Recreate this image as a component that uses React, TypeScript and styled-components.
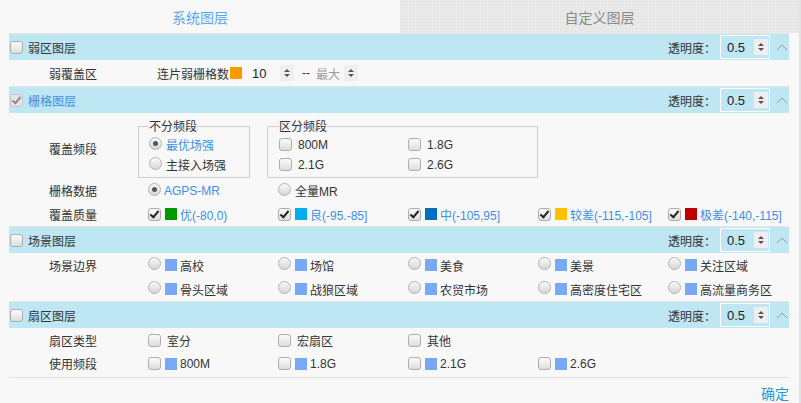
import React from 'react';
import styled, { createGlobalStyle, css } from 'styled-components';

const GlobalStyle = createGlobalStyle`
  html, body {
    margin: 0;
    padding: 0;
    background: #f8f8f8;
  }
  body {
    font-family: 'Liberation Sans', 'Noto Sans CJK SC', sans-serif;
    font-size: 12px;
    color: #333;
  }
`;

const BLUE = '#3f8fe2';

const Page = styled.div`
  width: 801px;
  height: 403px;
  overflow: hidden;
  border-right: 2px solid #e2e2e2;
  box-sizing: border-box;
`;

const Tabs = styled.div`
  display: grid;
  grid-template-columns: 400px 1fr;
  height: 33px;
`;

const Tab = styled.div<{ $active?: boolean }>`
  display: flex;
  align-items: center;
  justify-content: center;
  font-size: 14px;
  color: ${p => (p.$active ? '#58a8ee' : '#8a8a8a')};
  background: ${p => (p.$active ? 'transparent' : '#e9e9e9')};
  ${p =>
    !p.$active &&
    css`
      background-image: radial-gradient(#dedede 0.6px, transparent 0.8px);
      background-size: 3px 3px;
    `}
`;

const Content = styled.div`
  margin: 0 10px 0 9px;
`;

const SectionHeader = styled.div`
  display: flex;
  align-items: center;
  height: 26px;
  background: #bee6f3;
  border-top: 1px solid #e4e4e4;
  padding-left: 1px;
`;

const HeaderTitle = styled.span<{ $blue?: boolean }>`
  margin-left: 5px;
  font-size: 12px;
  color: ${p => (p.$blue ? BLUE : '#333')};
`;

const HeaderRight = styled.div`
  margin-left: auto;
  display: flex;
  align-items: center;
`;

const OpacityLabel = styled.span`
  color: #333;
  margin-right: 4px;
`;

const OpacityBox = styled.div`
  display: flex;
  align-items: center;
  width: 42px;
  height: 22px;
  border: 1px solid #fff;
  background: transparent;
  padding-left: 6px;
  font-size: 13px;
  color: #222;
`;

const Spinner = styled.span`
  display: inline-flex;
  flex-direction: column;
  align-items: center;
  justify-content: center;
  gap: 2px;
  width: 14px;
  height: 16px;
  background: #efefef;
  margin-left: auto;
  margin-right: 1px;

  &::before,
  &::after {
    content: '';
    width: 0;
    height: 0;
    border-left: 3px solid transparent;
    border-right: 3px solid transparent;
  }
  &::before {
    border-bottom: 3px solid #555;
  }
  &::after {
    border-top: 3px solid #555;
  }
`;

const Chevron = styled.svg`
  width: 12px;
  height: 8px;
  margin: 0 1px 0 6px;
`;

const Body = styled.div<{ $pt?: number; $pb?: number }>`
  padding-top: ${p => p.$pt ?? 0}px;
  padding-bottom: ${p => p.$pb ?? 0}px;
`;

const Row = styled.div<{ $h?: number }>`
  display: flex;
  align-items: center;
  height: ${p => p.$h ?? 23}px;
`;

const Label = styled.div`
  width: 99px;
  padding-left: 40px;
  flex-shrink: 0;
`;

const Cell = styled.div<{ $w?: number }>`
  display: flex;
  align-items: center;
  width: ${p => p.$w ?? 130}px;
  flex-shrink: 0;
  white-space: nowrap;
`;

const Box = styled.span<{ $checked?: boolean; $muted?: boolean }>`
  position: relative;
  display: inline-block;
  width: 11px;
  height: 11px;
  border: 1px solid #aeaeae;
  border-radius: 3px;
  background: linear-gradient(#fbfbfb, #dddddd);
  flex-shrink: 0;
  ${p =>
    p.$muted &&
    css`
      background: #e4e4e4;
      border-color: #c4c4c4;
    `}
  ${p =>
    p.$checked &&
    css`
      &::after {
        content: '';
        position: absolute;
        left: 3px;
        top: 0px;
        width: 3px;
        height: 7px;
        border: solid ${p.$muted ? '#8c8c8c' : '#222'};
        border-width: 0 2px 2px 0;
        transform: rotate(40deg);
      }
    `}
`;

const Radio = styled.span<{ $checked?: boolean }>`
  position: relative;
  display: inline-block;
  width: 11px;
  height: 11px;
  border: 1px solid #b3b3b3;
  border-radius: 50%;
  background: linear-gradient(#fafafa, #d6d6d6);
  flex-shrink: 0;
  margin-top: -3px;
  ${p =>
    p.$checked &&
    css`
      &::after {
        content: '';
        position: absolute;
        left: 3px;
        top: 3px;
        width: 5px;
        height: 5px;
        border-radius: 50%;
        background: #555;
      }
    `}
`;

const Swatch = styled.span<{ $color: string; $ml?: number }>`
  display: inline-block;
  width: 12px;
  height: 12px;
  background: ${p => p.$color};
  margin-left: ${p => p.$ml ?? 4}px;
  flex-shrink: 0;
`;

const Text = styled.span<{ $blue?: boolean; $gap?: number; $muted?: boolean }>`
  margin-left: ${p => p.$gap ?? 5}px;
  color: ${p => (p.$blue ? BLUE : p.$muted ? '#9a9a9a' : '#333')};
  font-size: 12px;
`;

const NumberField = styled.div<{ $w: number; $ml: number; $placeholder?: boolean }>`
  display: flex;
  align-items: center;
  width: ${p => p.$w}px;
  margin-left: ${p => p.$ml}px;
  font-size: ${p => (p.$placeholder ? 12 : 13)}px;
  color: ${p => (p.$placeholder ? '#9a9a9a' : '#222')};
`;

const Fieldsets = styled.div`
  display: flex;
  gap: 17px;
  margin-left: -10px;
`;

const Group = styled.fieldset<{ $w: number; $pl: number }>`
  margin: 0;
  width: ${p => p.$w}px;
  box-sizing: border-box;
  border: 1px solid #cfcfcf;
  padding: 0 0 2px ${p => p.$pl}px;
`;

const Legend = styled.legend`
  padding: 0;
  line-height: 16px;
  font-size: 12px;
  color: #333;
`;

const GroupGrid = styled.div<{ $cols: number }>`
  display: grid;
  grid-template-columns: repeat(${p => p.$cols}, 129px);
`;

const GroupItem = styled.div`
  display: flex;
  align-items: center;
  height: 20px;
  white-space: nowrap;
`;

const Footer = styled.div`
  display: flex;
  justify-content: flex-end;
  align-items: center;
  height: 29px;
  border-top: 1px solid #dedede;
`;

const Confirm = styled.span`
  font-size: 14px;
  color: #2598d6;
  cursor: pointer;
`;

const Header: React.FC<{ title: string; checked?: boolean; blue?: boolean }> = ({ title, checked, blue }) => (
  <SectionHeader>
    <Box $checked={checked} $muted={checked} />
    <HeaderTitle $blue={blue}>{title}</HeaderTitle>
    <HeaderRight>
      <OpacityLabel>透明度：</OpacityLabel>
      <OpacityBox>
        0.5
        <Spinner />
      </OpacityBox>
      <Chevron viewBox="0 0 12 8">
        <polyline points="1,7 6,2 11,7" fill="none" stroke="#9a9a9a" strokeWidth="1" />
      </Chevron>
    </HeaderRight>
  </SectionHeader>
);

const quality = [
  { color: '#009a00', text: '优(-80,0)' },
  { color: '#00aeef', text: '良(-95.-85]' },
  { color: '#0070c0', text: '中(-105,95]' },
  { color: '#ffc000', text: '较差(-115,-105]' },
  { color: '#c00000', text: '极差(-140,-115]' },
];

const SCENE = '#78a9f6';
const sceneRows = [
  ['高校', '场馆', '美食', '美景', '关注区域'],
  ['骨头区域', '战狼区域', '农贸市场', '高密度住宅区', '高流量商务区'],
];

export default function App() {
  return (
    <Page>
      <GlobalStyle />
      <Tabs>
        <Tab $active>系统图层</Tab>
        <Tab>自定义图层</Tab>
      </Tabs>
      <Content>
        <Header title="弱区图层" />
        <Body>
          <Row $h={26}>
            <Label>弱覆盖区</Label>
            <Text $gap={9}>连片弱栅格数</Text>
            <Swatch $color="#ff9900" $ml={1} />
            <NumberField $w={43} $ml={10}>
              10
              <Spinner />
            </NumberField>
            <Text $gap={7}>--</Text>
            <NumberField $w={43} $ml={6} $placeholder>
              最大
              <Spinner />
            </NumberField>
          </Row>
        </Body>

        <Header title="栅格图层" checked blue />
        <Body $pt={4}>
          <Row $h={62}>
            <Label>覆盖频段</Label>
            <Fieldsets>
              <Group $w={112} $pl={10}>
                <Legend>不分频段</Legend>
                <GroupItem>
                  <Radio $checked />
                  <Text $blue $gap={4}>最优场强</Text>
                </GroupItem>
                <GroupItem>
                  <Radio />
                  <Text $gap={4}>主接入场强</Text>
                </GroupItem>
              </Group>
              <Group $w={252} $pl={11}>
                <Legend>区分频段</Legend>
                <GroupGrid $cols={2}>
                  {['800M', '1.8G', '2.1G', '2.6G'].map(t => (
                    <GroupItem key={t}>
                      <Box />
                      <Text $gap={6}>{t}</Text>
                    </GroupItem>
                  ))}
                </GroupGrid>
              </Group>
            </Fieldsets>
          </Row>
          <Row>
            <Label>栅格数据</Label>
            <Cell>
              <Radio $checked />
              <Text $blue $gap={3}>AGPS-MR</Text>
            </Cell>
            <Cell>
              <Radio />
              <Text $gap={4}>全量MR</Text>
            </Cell>
          </Row>
          <Row $h={24}>
            <Label>覆盖质量</Label>
            {quality.map(q => (
              <Cell key={q.text}>
                <Box $checked />
                <Swatch $color={q.color} />
                <Text $blue $gap={3}>{q.text}</Text>
              </Cell>
            ))}
          </Row>
        </Body>

        <Header title="场景图层" />
        <Body>
          {sceneRows.map((r, i) => (
            <Row key={i} $h={24}>
              <Label>{i === 0 ? '场景边界' : ''}</Label>
              {r.map(t => (
                <Cell key={t}>
                  <Radio />
                  <Swatch $color={SCENE} />
                  <Text $gap={3}>{t}</Text>
                </Cell>
              ))}
            </Row>
          ))}
        </Body>

        <Header title="扇区图层" />
        <Body $pt={1} $pb={2}>
          <Row>
            <Label>扇区类型</Label>
            {['室分', '宏扇区', '其他'].map(t => (
              <Cell key={t}>
                <Box />
                <Text $gap={6}>{t}</Text>
              </Cell>
            ))}
          </Row>
          <Row>
            <Label>使用频段</Label>
            {['800M', '1.8G', '2.1G', '2.6G'].map(t => (
              <Cell key={t}>
                <Box />
                <Swatch $color={SCENE} />
                <Text $gap={3}>{t}</Text>
              </Cell>
            ))}
          </Row>
        </Body>
        <Footer>
          <Confirm>确定</Confirm>
        </Footer>
      </Content>
    </Page>
  );
}
